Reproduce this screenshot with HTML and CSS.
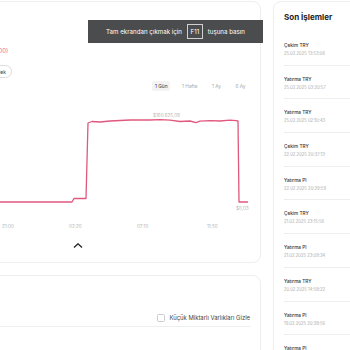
FILE: index.html
```html
<!DOCTYPE html>
<html lang="tr">
<head>
    <meta charset="UTF-8">
    <meta name="viewport" content="width=device-width, initial-scale=1.0">
    <title>Cüzdan</title>
    <link rel="stylesheet" href="styles.css">
</head>
<body>
    <div class="layout">
        <div class="main-col">

            <!-- Portfolio chart -->
            <section class="card chart-card">
                <div class="summary">
                    <div class="change">+$160.625,06 (+%535.416.766,00)</div>
                    <div class="actions">
                        <button class="pill">Yatır</button>
                        <button class="pill">Çek</button>
                    </div>
                </div>
                <div class="ranges">
                    <span class="range active">1 Gün</span>
                    <span class="range">1 Hafta</span>
                    <span class="range">1 Ay</span>
                    <span class="range">6 Ay</span>
                </div>
                <svg class="chart" width="365" height="140" viewBox="-105 96 365 140">
                    <polyline class="line" points="-105,202 72,202 74,198.5 86,198.5 88,123 92,121.5 100,122 110,121 120,120.5 130,120 140,119.8 150,120 160,119.6 170,120.2 180,121.5 190,121 196,122.6 200,121.2 210,120.6 220,121 230,120.2 236,120.6 238,121 239,202 248,202"/>
                    <text class="value" x="153" y="117">$160.625,09</text>
                    <text class="value" x="236" y="210">$0,03</text>
                    <text class="tick" x="2" y="228">21:00</text>
                    <text class="tick" x="69" y="228">02:20</text>
                    <text class="tick" x="137" y="228">07:10</text>
                    <text class="tick" x="207" y="228">11:50</text>
                </svg>
                <div class="toggle">
                    <svg width="10" height="5" viewBox="0 0 10 5"><path d="M1 4.5 L5 0.8 L9 4.5"/></svg>
                </div>
            </section>

            <!-- Assets -->
            <section class="card assets-card">
                <div class="assets-bar">
                    <label class="hide-small"><span class="box"></span>Küçük Miktarlı Varlıkları Gizle</label>
                </div>
            </section>
        </div>

        <!-- Recent transactions -->
        <aside class="card history">
            <h3>Son İşlemler</h3>
            <ul class="tx-list">
                <li><div class="tx-title">Çekim TRY</div><div class="tx-date">25.02.2025 13:53:06</div></li>
                <li><div class="tx-title">Yatırma TRY</div><div class="tx-date">25.02.2025 03:20:57</div></li>
                <li><div class="tx-title">Yatırma TRY</div><div class="tx-date">25.02.2025 02:10:43</div></li>
                <li><div class="tx-title">Çekim TRY</div><div class="tx-date">22.02.2025 20:37:13</div></li>
                <li><div class="tx-title">Yatırma PI</div><div class="tx-date">22.02.2025 20:29:59</div></li>
                <li><div class="tx-title">Çekim TRY</div><div class="tx-date">21.02.2025 23:15:56</div></li>
                <li><div class="tx-title">Yatırma PI</div><div class="tx-date">21.02.2025 23:09:34</div></li>
                <li><div class="tx-title">Yatırma TRY</div><div class="tx-date">20.02.2025 14:58:22</div></li>
                <li><div class="tx-title">Yatırma PI</div><div class="tx-date">19.02.2025 20:38:56</div></li>
                <li><div class="tx-title">Yatırma PI</div><div class="tx-date">19.02.2025 20:30:11</div></li>
            </ul>
        </aside>
    </div>

    <!-- Browser fullscreen notice -->
    <div class="fs-notice">Tam ekrandan çıkmak için <span class="key">F11</span> tuşuna basın</div>
</body>
</html>
```

FILE: styles.css
```css
body {
    margin: 0;
    font-family: Inter, "Noto Sans", sans-serif;
    background-color: #ffffff;
    color: #222222;
    overflow: hidden;
}
.layout {
    display: flex;
    align-items: flex-start;
    gap: 12px;
    margin-left: -106px;
    padding-top: 1px;
}
.main-col {
    width: 367px;
    flex-shrink: 0;
    display: flex;
    flex-direction: column;
    gap: 12px;
}
.card {
    background-color: #ffffff;
    border: 1px solid #eeeeee;
    border-radius: 8px;
    box-sizing: border-box;
}
/* Chart card */
.chart-card {
    height: 262px;
    padding: 44px 12px 0 12px;
}
.summary {
    width: 105px;
    display: flex;
    flex-direction: column;
    align-items: flex-end;
}
.change {
    color: #e8638c;
    font-size: 5.8px;
    line-height: 10px;
    margin-right: 4px;
    margin-bottom: 9px;
    white-space: nowrap;
}
.actions {
    display: flex;
    gap: 3px;
    height: 13px;
}
.pill {
    font-family: inherit;
    font-size: 5px;
    height: 13px;
    padding: 0 5px;
    border: 1px solid #dcdcdc;
    border-radius: 7px;
    background-color: #ffffff;
    color: #333333;
}
.ranges {
    display: flex;
    justify-content: flex-end;
    gap: 9.5px;
    margin-top: 3px;
}
.range {
    font-size: 4.8px;
    line-height: 10px;
    padding: 0 2.5px;
    color: #aaaaaa;
    border-radius: 2px;
}
.range.active {
    background-color: #f3f3f3;
    color: #333333;
}
.chart {
    display: block;
    margin: 5px -12px 0 -12px;
}
.chart .line {
    fill: none;
    stroke: #e0587d;
    stroke-width: 1.3;
    stroke-linejoin: round;
}
.chart text {
    font-family: Inter, "Noto Sans", sans-serif;
    font-size: 4.6px;
    fill: #b5b5b5;
}
.toggle {
    display: flex;
    justify-content: center;
    margin-top: 4px;
    padding-top: 3px;
}
.toggle path {
    fill: none;
    stroke: #222222;
    stroke-width: 1.3;
}
/* Assets card */
.assets-card {
    height: 100px;
    padding: 36px 10px 0 10px;
}
.assets-bar {
    display: flex;
    justify-content: flex-end;
    padding-bottom: 3px;
    border-bottom: 1px solid #eeeeee;
}
.hide-small {
    display: flex;
    align-items: center;
    font-size: 5.9px;
    line-height: 11px;
    color: #444444;
}
.hide-small .box {
    width: 6px;
    height: 6px;
    border: 1px solid #cccccc;
    border-radius: 1.5px;
    margin-right: 4px;
}
/* Transactions */
.history {
    width: 120px;
    flex-shrink: 0;
    min-height: 380px;
    padding: 9px 0 0 10px;
}
.history h3 {
    margin: 0 0 9px 0;
    font-size: 8px;
    line-height: 12px;
    font-weight: 700;
    color: #222222;
}
.tx-list {
    list-style: none;
    margin: 0;
    padding: 0;
}
.tx-list li {
    padding: 8px 0 6.7px 0;
    border-bottom: 1px solid #eeeeee;
}
.tx-title {
    font-size: 4.7px;
    line-height: 10px;
    font-weight: 500;
    color: #333333;
}
.tx-date {
    font-size: 4.2px;
    line-height: 8px;
    color: #aaaaaa;
}
/* Fullscreen notice overlay */
.fs-notice {
    position: absolute;
    top: 20px;
    left: 88px;
    width: 175px;
    height: 23px;
    display: flex;
    align-items: center;
    justify-content: center;
    gap: 5px;
    background-color: #4b4c4e;
    color: #ffffff;
    font-size: 6.2px;
}
.fs-notice .key {
    border: 1px solid #d0d0d0;
    padding: 3px 2.5px;
    line-height: 7px;
}
```
